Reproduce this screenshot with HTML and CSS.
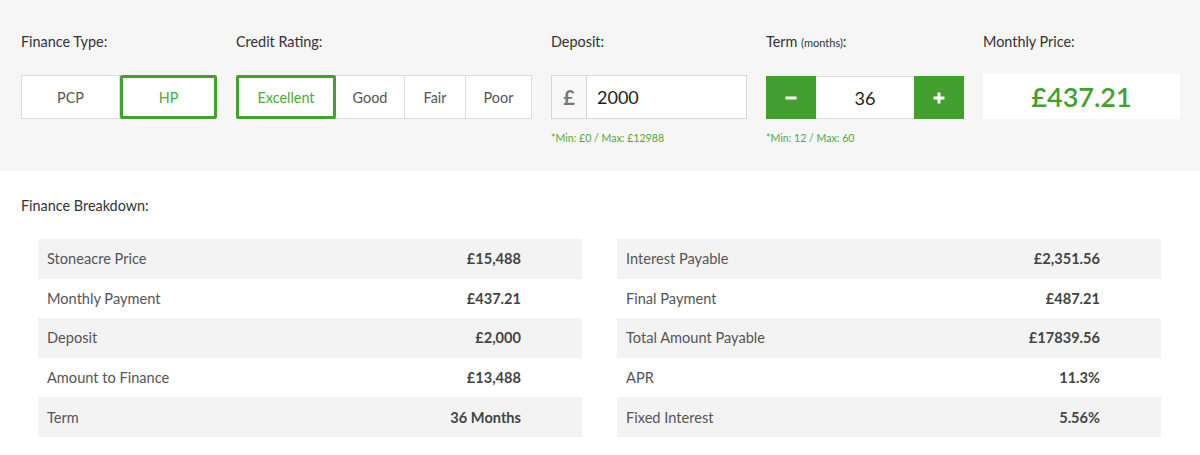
FILE: index.html
```html
<!DOCTYPE html>
<html lang="en">
<head>
<meta charset="utf-8">
<title>Finance Calculator</title>
<link rel="stylesheet" href="styles.css">
</head>
<body>
<section class="controls">
  <div class="col col-type">
    <div class="label">Finance Type:</div>
    <div class="group">
      <button class="opt opt-pcp">PCP</button>
      <button class="opt opt-hp active">HP</button>
    </div>
  </div>
  <div class="col col-credit">
    <div class="label">Credit Rating:</div>
    <div class="group">
      <button class="opt opt-exc active">Excellent</button>
      <button class="opt opt-good">Good</button>
      <button class="opt opt-fair">Fair</button>
      <button class="opt opt-poor">Poor</button>
    </div>
  </div>
  <div class="col col-deposit">
    <div class="label">Deposit:</div>
    <div class="deposit">
      <span class="pound">£</span>
      <span class="deposit-value">2000</span>
    </div>
    <div class="hint">*Min: £0 / Max: £12988</div>
  </div>
  <div class="col col-term">
    <div class="label">Term <small>(months)</small>:</div>
    <div class="stepper">
      <button class="step"><svg width="12" height="12" viewBox="0 0 12 12"><rect x="0.5" y="4.5" width="11" height="3" fill="#fff"/></svg></button>
      <span class="step-value">36</span>
      <button class="step"><svg width="12" height="12" viewBox="0 0 12 12"><rect x="0.5" y="4.5" width="11" height="3" fill="#fff"/><rect x="4.5" y="0.5" width="3" height="11" fill="#fff"/></svg></button>
    </div>
    <div class="hint">*Min: 12 / Max: 60</div>
  </div>
  <div class="col col-price">
    <div class="label">Monthly Price:</div>
    <div class="price">£437.21</div>
  </div>
</section>

<section class="breakdown">
  <div class="label">Finance Breakdown:</div>
  <div class="tables">
    <table class="table">
      <tr><td>Stoneacre Price</td><td class="val">£15,488</td></tr>
      <tr><td>Monthly Payment</td><td class="val">£437.21</td></tr>
      <tr><td>Deposit</td><td class="val">£2,000</td></tr>
      <tr><td>Amount to Finance</td><td class="val">£13,488</td></tr>
      <tr><td>Term</td><td class="val">36 Months</td></tr>
    </table>
    <table class="table">
      <tr><td>Interest Payable</td><td class="val">£2,351.56</td></tr>
      <tr><td>Final Payment</td><td class="val">£487.21</td></tr>
      <tr><td>Total Amount Payable</td><td class="val">£17839.56</td></tr>
      <tr><td>APR</td><td class="val">11.3%</td></tr>
      <tr><td>Fixed Interest</td><td class="val">5.56%</td></tr>
    </table>
  </div>
</section>
</body>
</html>
```

FILE: styles.css
```css
* { box-sizing: border-box; }
html, body { margin: 0; padding: 0; background: #fff; }
body {
  font-family: Lato, "Open Sans", "Liberation Sans", sans-serif;
  color: #333;
  font-size: 14px;
}

.controls {
  background: #f6f6f6;
  display: flex;
  gap: 19px;
  padding: 33px 0 26px 21px;
  height: 171px;
}
.col { display: flex; flex-direction: column; }
.col-type { width: 196px; }
.col-credit { width: 296px; }
.col-deposit { width: 196px; }
.col-term { width: 198px; }
.col-price { width: 197px; }

.label {
  font-size: 14.4px;
  line-height: 18px;
  color: #333;
  margin-bottom: 24px;
  white-space: nowrap;
}
.label small { font-size: 11px; }

.group { display: flex; height: 44px; }
.opt {
  font-family: inherit;
  font-size: 14.4px;
  color: #555;
  background: #fff;
  border: 1px solid #dcdcdc;
  margin: 0;
  padding: 0;
  cursor: pointer;
}
.opt + .opt { border-left: none; }
.opt-pcp { width: 99px; }
.opt-hp { width: 97px; }
.opt-exc { width: 100px; }
.opt-good { width: 69px; }
.opt-fair { width: 61px; }
.opt-poor { width: 66px; }
.opt.active {
  border: 3px solid #43a02f;
  border-radius: 2px;
  color: #4daa3a;
}

.deposit {
  display: flex;
  height: 44px;
  background: #fff;
  border: 1px solid #d6d6d6;
}
.pound {
  width: 35px;
  display: flex;
  align-items: center;
  justify-content: center;
  border-right: 1px solid #d6d6d6;
  background: #f8f8f8;
  color: #777;
  font-size: 20px;
  font-weight: 700;
}
.deposit-value {
  display: flex;
  align-items: center;
  padding-left: 10px;
  font-size: 18px;
  color: #222;
}

.hint {
  margin-top: 12px;
  font-size: 10.6px;
  line-height: 14px;
  color: #4daa3a;
  white-space: nowrap;
}

.stepper { display: flex; height: 44px; }
.step {
  width: 50px;
  border: none;
  margin: 0;
  padding: 0;
  background: #43a02f;
  display: flex;
  align-items: center;
  justify-content: center;
}
.step-value {
  flex: 1;
  display: flex;
  align-items: center;
  justify-content: center;
  background: #fff;
  border-top: 1px solid #dcdcdc;
  border-bottom: 1px solid #dcdcdc;
  font-size: 18px;
  color: #222;
}

.price {
  height: 45px;
  margin-top: -1px;
  background: #fff;
  display: flex;
  align-items: center;
  justify-content: center;
  color: #43a02f;
  font-size: 27px;
  font-weight: 600;
}

.breakdown { padding: 26px 0 0 21px; }
.tables {
  display: flex;
  gap: 35px;
  padding-left: 17px;
}
.table {
  width: 544px;
  border-collapse: collapse;
}
.table tr { height: 39.6px; }
.table tr:nth-child(odd) { background: #f3f3f3; }
.table td {
  padding: 0 0 0 9px;
  font-size: 14.6px;
  color: #555;
}
.table td.val {
  text-align: right;
  padding: 0 61px 0 0;
  color: #444;
  font-weight: 700;
}
```
